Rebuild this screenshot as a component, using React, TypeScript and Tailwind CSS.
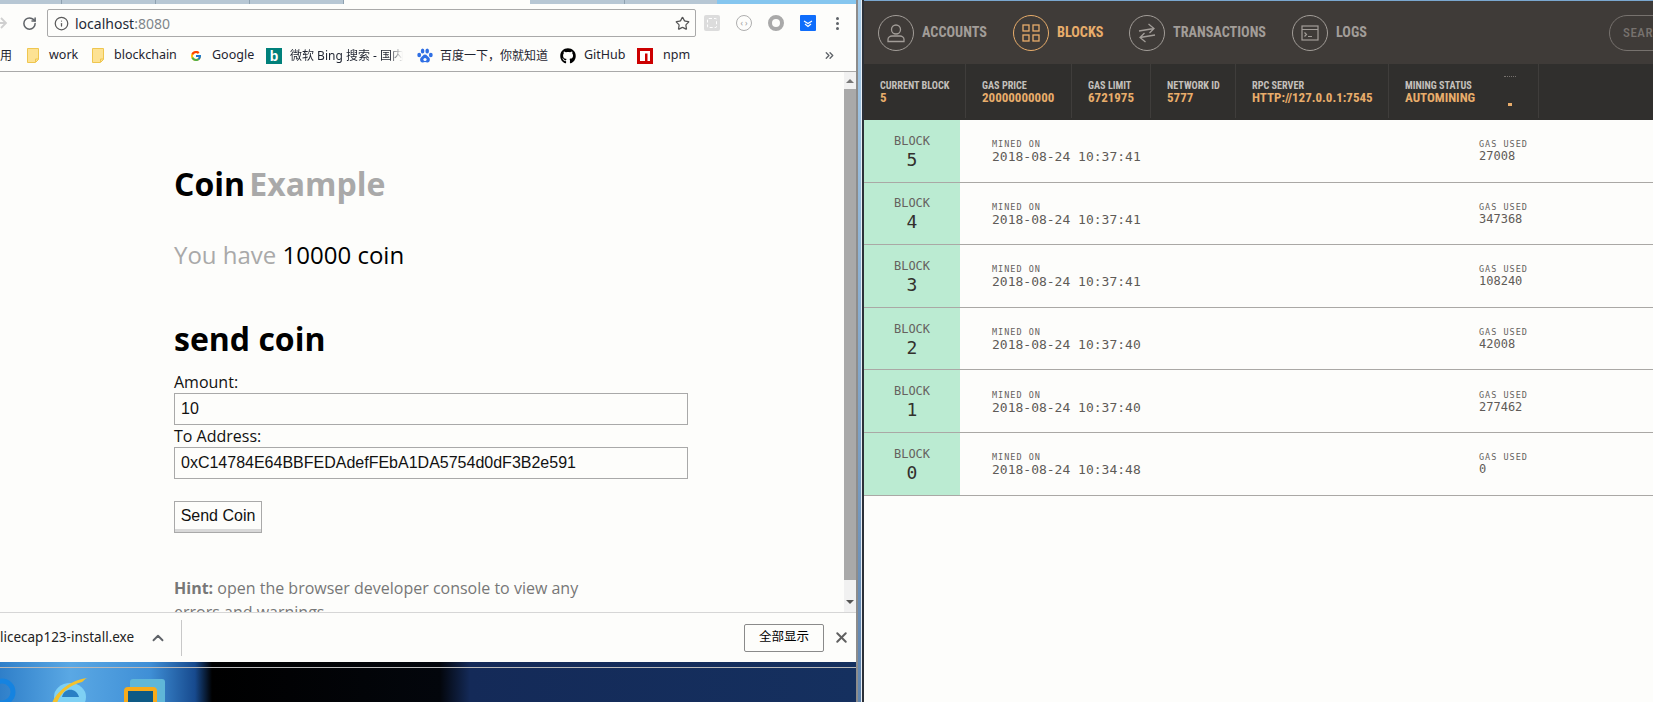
import { ChevronUp, ChevronsRight, Info, RotateCw, Star, X } from "lucide-react";
import { FaGithub } from "react-icons/fa";
import { FcGoogle } from "react-icons/fc";

const blocks = [
  { id: 5, minedOn: "2018-08-24 10:37:41", gas: "27008" },
  { id: 4, minedOn: "2018-08-24 10:37:41", gas: "347368" },
  { id: 3, minedOn: "2018-08-24 10:37:41", gas: "108240" },
  { id: 2, minedOn: "2018-08-24 10:37:40", gas: "42008" },
  { id: 1, minedOn: "2018-08-24 10:37:40", gas: "277462" },
  { id: 0, minedOn: "2018-08-24 10:34:48", gas: "0" },
];

function FolderIcon() {
  return (
    <svg width="12" height="15" viewBox="0 0 12 15" className="shrink-0">
      <path d="M.5.5h11v11l-3 3H.5z" fill="#fde293" stroke="#efc64f" />
      <path d="M8.500 14v-3h3" fill="none" stroke="#efc64f" />
    </svg>
  );
}

function BaiduIcon() {
  return (
    <svg width="16" height="16" viewBox="0 0 16 16" className="shrink-0">
      <g fill="#2f6fe4">
        <ellipse cx="2.200" cy="7" rx="1.900" ry="2.300" />
        <ellipse cx="5.600" cy="3" rx="1.800" ry="2.500" />
        <ellipse cx="10.200" cy="3" rx="1.800" ry="2.500" />
        <ellipse cx="13.800" cy="7" rx="1.900" ry="2.300" />
        <path d="M8 6.500c2 0 2.500 2 4 3 1.600 1.200 1 5.500-2 5-1 0-1.400-.4-2-.4s-1 .4-2 .4c-3 .4-3.600-3.800-2-5 1.500-1 2-3 4-3z" />
      </g>
      <circle cx="8" cy="11.500" r="1.600" fill="#fff" />
    </svg>
  );
}

function NpmIcon() {
  return (
    <svg width="16" height="16" viewBox="0 0 16 16" className="shrink-0">
      <rect width="16" height="16" fill="#c00" />
      <path d="M3 3h10v10h-2.500V5.500H8V13H3z" fill="#fff" />
    </svg>
  );
}

function BrowserToolbar() {
  return (
    <div className="flex h-[38px] items-center bg-[#fdfdfb]">
      <svg width="10" height="14" viewBox="0 0 10 14" className="ml-[-2px] shrink-0 text-[#cfcfcf]">
        <path d="M0 7h8M3 2l5 5-5 5" fill="none" stroke="currentColor" strokeWidth="1.800" />
      </svg>
      <RotateCw className="ml-[14px] h-[15px] w-[15px] shrink-0 text-[#5f6368]" strokeWidth={2.400} />
      <div className="ml-[10px] flex h-[28px] w-[649px] shrink-0 items-center rounded-[2px] border border-[#a9a9a9] pl-[6px] pr-[5px] text-[14px]">
        <Info className="h-[15px] w-[15px] shrink-0 text-[#5a5a5a]" strokeWidth={2} />
        <span className="ml-[6px] text-[#1f2a37]">
          localhost<span className="text-[#80868b]">:8080</span>
        </span>
        <Star className="ml-auto h-[15px] w-[15px] text-[#555]" strokeWidth={2} />
      </div>
      <div className="ml-[8px] flex h-[16px] w-[16px] shrink-0 items-center justify-center rounded-[2px] bg-[#dcdcdc]">
        <div className="h-[10px] w-[10px] rounded-[2px] border border-dashed border-white" />
      </div>
      <div className="ml-[16px] flex h-[16px] w-[16px] shrink-0 items-center justify-center rounded-full border border-[#aeaeae] text-[8px] leading-none text-[#999]">
        ‹ ›
      </div>
      <div className="ml-[16px] h-[16px] w-[16px] shrink-0 rounded-full border-[4px] border-[#a9a9a9]" />
      <div className="ml-[16px] flex h-[16px] w-[16px] shrink-0 items-center justify-center rounded-[1px] bg-[#0f6dfb]">
        <svg width="10" height="9" viewBox="0 0 10 9">
          <path d="M1 2l4 2.500L9 2M2 5l3 2.500L8 5" fill="none" stroke="#fff" strokeWidth="1.200" />
        </svg>
      </div>
      <div className="ml-[20px] flex shrink-0 flex-col gap-[2px]">
        <div className="h-[3px] w-[3px] rounded-full bg-[#5f6368]" />
        <div className="h-[3px] w-[3px] rounded-full bg-[#5f6368]" />
        <div className="h-[3px] w-[3px] rounded-full bg-[#5f6368]" />
      </div>
    </div>
  );
}

function BookmarksBar() {
  return (
    <div className="flex h-[30px] items-center overflow-hidden whitespace-nowrap border-b border-[#a9a9a9] bg-[#fdfdfb] pb-[2px] text-[12.500px] text-[#1f2430]">
      <span className="w-[12px] shrink-0 overflow-hidden text-right text-[12px]">用</span>
      <div className="ml-[15px] shrink-0"><FolderIcon /></div>
      <span className="ml-[10px] w-[28px] shrink-0">work</span>
      <div className="ml-[15px] shrink-0"><FolderIcon /></div>
      <span className="ml-[10px] w-[61px] shrink-0">blockchain</span>
      <FcGoogle className="ml-[15px] h-[12px] w-[12px] shrink-0" />
      <span className="ml-[10px] w-[41px] shrink-0">Google</span>
      <div className="ml-[13px] flex h-[16px] w-[16px] shrink-0 items-center justify-center bg-[#00807a] font-['Liberation_Sans',sans-serif] text-[14px] font-bold leading-none text-white">
        b
      </div>
      <span className="ml-[8px] w-[113px] shrink-0 overflow-hidden text-[12px] [mask-image:linear-gradient(to_right,black_88%,transparent)]">微软 Bing 搜索 - 国内</span>
      <div className="ml-[14px] shrink-0"><BaiduIcon /></div>
      <span className="ml-[7px] w-[108px] shrink-0 text-[12px]">百度一下，你就知道</span>
      <FaGithub className="ml-[12px] h-[16px] w-[16px] shrink-0 text-black" />
      <span className="ml-[8px] w-[41px] shrink-0">GitHub</span>
      <div className="ml-[12px] shrink-0"><NpmIcon /></div>
      <span className="ml-[10px] w-[24px] shrink-0">npm</span>
      <ChevronsRight className="ml-[136px] h-[13px] w-[13px] shrink-0 text-[#5f6368]" strokeWidth={2.500} />
    </div>
  );
}

function PageContent() {
  return (
    <div className="flex h-[540px] bg-[#fdfdfb]">
      <div className="min-w-0 flex-1 overflow-hidden pl-[174px] font-['Open_Sans',sans-serif]">
        <h1 className="mt-[92px] text-[32px] font-bold leading-[40px] text-black">
          Coin <span className="ml-[-4px] text-[#a9a9a9]">Example</span>
        </h1>
        <p className="mt-[35px] text-[24px] leading-[32px] text-[#a9a9a9]">
          You have <span className="text-black">10000 coin</span>
        </p>
        <h2 className="mt-[48px] text-[32px] font-bold leading-[40px] text-black">send coin</h2>
        <div className="mt-[12px] text-[16px] leading-[22px] text-[#111]">Amount:</div>
        <input
          readOnly
          value="10"
          className="block h-[32px] w-[514px] border border-[#a9a9a9] bg-[#fdfdfb] px-[6px] font-['Liberation_Sans',sans-serif] text-[16px] text-[#111] outline-none"
        />
        <div className="text-[16px] leading-[22px] text-[#111]">To Address:</div>
        <input
          readOnly
          value="0xC14784E64BBFEDAdefFEbA1DA5754d0dF3B2e591"
          className="block h-[32px] w-[514px] border border-[#a9a9a9] bg-[#fdfdfb] px-[6px] font-['Liberation_Sans',sans-serif] text-[16px] text-[#111] outline-none"
        />
        <button className="mt-[22px] block h-[32px] w-[88px] border border-[#a9a9a9] bg-[#fdfdfb] pb-[2px] font-['Liberation_Sans',sans-serif] text-[16px] leading-none text-[#111] shadow-[inset_0_-3px_0_#d8d8d8]">
          Send Coin
        </button>
        <p className="mt-[43px] w-[420px] text-[16px] leading-[24px] text-[#777]">
          <strong className="font-bold">Hint:</strong> open the browser developer console to view any errors and warnings
        </p>
      </div>
      <div className="flex w-[12px] shrink-0 flex-col items-center bg-[#f1f1f1]">
        <div className="mt-[7px] h-0 w-0 border-x-[4px] border-b-[4px] border-x-transparent border-b-[#777]" />
        <div className="mt-[6px] h-[491px] w-full bg-[#a9a9a9]" />
        <div className="mt-[20px] h-0 w-0 border-x-[4px] border-t-[4px] border-x-transparent border-t-[#555]" />
      </div>
    </div>
  );
}

function DownloadBar() {
  return (
    <div className="flex h-[50px] shrink-0 items-center border-t border-[#d6d6d6] bg-[#fdfdfb] text-[13.500px] text-[#222]">
      <span className="w-[134px] shrink-0 whitespace-nowrap">licecap123-install.exe</span>
      <ChevronUp className="ml-[15px] h-[18px] w-[18px] shrink-0 text-[#5f6368]" strokeWidth={2.500} />
      <div className="ml-[14px] h-[36px] w-px shrink-0 bg-[#c8c8c8]" />
      <button className="ml-auto h-[28px] w-[80px] rounded-[2px] border border-[#8a8a8a] text-[12.500px] leading-none text-black">全部显示</button>
      <X className="ml-[9px] mr-[6px] h-[17px] w-[17px] shrink-0 text-[#5f5f5f]" strokeWidth={2.800} />
    </div>
  );
}

function DesktopStrip() {
  return (
    <div className="relative flex-1 overflow-hidden bg-[linear-gradient(90deg,#2f7fc9_0,#5aa8e4_70px,#3f8fd6_150px,#174a8e_195px,#000_212px,#03060c_440px,#142a58_470px,#15305f_100%)]">
      <div className="mt-[5px] h-px bg-[#b9b9b9]" />
      <svg width="16" height="26" viewBox="0 0 16 26" className="absolute left-0 top-[16px]">
        <circle cx="2" cy="14" r="11" fill="none" stroke="#1583e0" strokeWidth="5" />
      </svg>
      <svg width="40" height="26" viewBox="0 0 40 26" className="absolute left-[50px] top-[15px]">
        <ellipse cx="20" cy="20" rx="16" ry="14" fill="#7ed0f4" />
        <path d="M12 20c2-9 14-10 17 0z" fill="#2a7fc4" />
        <path d="M2 26C8 12 24 2 38 1c-3 0-4 3-6 4C20 8 10 16 7 26z" fill="#f3c22c" />
      </svg>
      <svg width="42" height="24" viewBox="0 0 42 24" className="absolute left-[124px] top-[17px]">
        <rect x="6" y="0" width="35" height="26" rx="3" fill="#5fb7d8" />
        <rect x="2" y="10" width="29" height="20" rx="2" fill="#0e5a85" stroke="#f7ab1b" strokeWidth="4" />
      </svg>
    </div>
  );
}

function NavItem({ label, active, width, children }: { label: string; active?: boolean; width: string; children: React.ReactNode }) {
  return (
    <div className={`flex shrink-0 items-center gap-[8px] ${width} ${active ? "text-[#e8ad6b]" : "text-[#a29d98]"}`}>
      <div className="flex h-[36px] w-[36px] shrink-0 items-center justify-center rounded-full border-[1.500px] border-current">
        {children}
      </div>
      <span className="text-[14.200px] font-bold [font-stretch:75%]">{label}</span>
    </div>
  );
}

function Stat({ label, value, width }: { label: string; value: string; width: string }) {
  return (
    <div className={`flex h-[54px] shrink-0 flex-col border-r border-[#3f3d3b] pl-[16px] pt-[16px] [font-stretch:75%] ${width}`}>
      <span className="text-[10.200px] font-bold leading-[12px] text-[#c4c0bc]">{label}</span>
      <span className="text-[13px] font-bold leading-[12px] text-[#e8ad6b]">{value}</span>
    </div>
  );
}

function GanachePanel() {
  return (
    <div className="flex h-full min-w-0 flex-1 flex-col bg-[#fdfdfb] font-['Roboto',sans-serif]">
      <div className="flex h-[64px] shrink-0 items-center overflow-hidden border-t border-[#7aa7d0] bg-[#3f3b38] pl-[14px]">
        <NavItem label="ACCOUNTS" width="w-[135px]">
          <svg width="20" height="20" viewBox="0 0 20 20" fill="none" stroke="currentColor" strokeWidth="1.300">
            <circle cx="10" cy="6.500" r="4.500" />
            <path d="M2 18.500v-2c0-2 2-3.500 4-3.500h8c2 0 4 1.500 4 3.500v2z" />
          </svg>
        </NavItem>
        <NavItem label="BLOCKS" active width="w-[116px]">
          <svg width="18" height="18" viewBox="0 0 18 18" fill="none" stroke="currentColor" strokeWidth="1.300">
            <rect x="1" y="1" width="6" height="6" />
            <rect x="11" y="1" width="6" height="6" />
            <rect x="1" y="11" width="6" height="6" />
            <rect x="11" y="11" width="6" height="6" />
          </svg>
        </NavItem>
        <NavItem label="TRANSACTIONS" width="w-[163px]">
          <svg width="22" height="22" viewBox="0 0 22 22" fill="none" stroke="currentColor" strokeWidth="1.300">
            <path d="M3 9l15-2.500M12.500 2L18 6.500 13.500 11M19 13L4 15.500M9.500 20L4 15.500 8.500 11" />
          </svg>
        </NavItem>
        <NavItem label="LOGS" width="w-[150px]">
          <svg width="18" height="16" viewBox="0 0 18 16" fill="none" stroke="currentColor" strokeWidth="1.200">
            <rect x="1" y="1" width="16" height="14" />
            <path d="M1 4.500h16M3.500 7.500l2 2-2 2M7 11.500h4" />
          </svg>
        </NavItem>
        <div className="ml-[167px] flex h-[36px] w-[100px] shrink-0 items-center rounded-full border border-[#77726e] pl-[13px] text-[13px] font-medium tracking-[0.500px] text-[#77726e] [font-stretch:75%]">
          SEARCH
        </div>
      </div>
      <div className="flex h-[56px] shrink-0 items-start bg-[#302f2d]">
        <Stat label="CURRENT BLOCK" value="5" width="w-[102px]" />
        <Stat label="GAS PRICE" value="20000000000" width="w-[106px]" />
        <Stat label="GAS LIMIT" value="6721975" width="w-[79px]" />
        <Stat label="NETWORK ID" value="5777" width="w-[85px]" />
        <Stat label="RPC SERVER" value="HTTP://127.0.0.1:7545" width="w-[153px]" />
        <div className="relative w-[150px] shrink-0">
          <Stat label="MINING STATUS" value="AUTOMINING" width="w-[150px]" />
          <div className="absolute left-[119px] top-[39px] h-[3px] w-[4px] bg-[#e8ad6b]" />
          <div className="absolute left-[115px] top-[12px] h-px w-[12px] border-t border-dotted border-[#77726e]" />
        </div>
      </div>
      <div className="flex flex-col font-['DejaVu_Sans_Mono',monospace] text-[#5f5b57]">
        {blocks.map((b) => (
          <div key={b.id} className="flex h-[62.600px] items-stretch border-b border-[#aaa8a5]">
            <div className="flex w-[96px] shrink-0 flex-col items-center justify-center bg-[#bbebd2] pt-[2px]">
              <span className="text-[12px] font-light leading-[15px] text-[#66625e]">BLOCK</span>
              <span className="text-[18px] leading-[21px] text-[#33302d]">{b.id}</span>
            </div>
            <div className="ml-[32px] flex w-[462px] shrink-0 flex-col justify-center pt-[3px]">
              <span className="text-[8.500px] leading-[9px] tracking-[1px] text-[#66625e]">MINED ON</span>
              <span className="text-[13px] leading-[15px]">{b.minedOn}</span>
            </div>
            <div className="ml-[25px] flex flex-col justify-center pt-[3px]">
              <span className="text-[8.500px] leading-[9px] tracking-[1px] text-[#66625e]">GAS USED</span>
              <span className="text-[12px] leading-[15px]">{b.gas}</span>
            </div>
          </div>
        ))}
      </div>
    </div>
  );
}

export default function App() {
  return (
    <div className="flex h-[702px] w-[1653px] overflow-hidden bg-[#fdfdfb] font-['Noto_Sans','Noto_Sans_CJK_SC',sans-serif]">
      <div className="flex h-full w-[856px] shrink-0 flex-col">
        <div className="flex h-[4px] shrink-0 bg-[#b7c7d4]">
          <div className="w-[62px] border-r border-[#8ea1b0]" />
          <div className="w-[94px] border-r border-[#8ea1b0]" />
          <div className="w-[94px] border-r border-[#8ea1b0]" />
          <div className="w-[94px] border-r border-[#8ea1b0]" />
          <div className="w-[186px] bg-[#fdfdfb]" />
          <div className="w-[95px] border-r border-[#8ea1b0]" />
          <div className="w-[92px]" />
          <div className="flex-1 bg-[#85c6ef]" />
        </div>
        <BrowserToolbar />
        <BookmarksBar />
        <PageContent />
        <DownloadBar />
        <DesktopStrip />
      </div>
      <div className="h-full w-[2px] shrink-0 bg-[#8c8c8c]" />
      <div className="h-full w-[3px] shrink-0 bg-[linear-gradient(#a8cdea,#5f83ad)]" />
      <div className="h-full w-[1px] shrink-0 bg-[#e8eef4]" />
      <div className="h-full w-[2px] shrink-0 bg-[#2b3038]" />
      <GanachePanel />
    </div>
  );
}
